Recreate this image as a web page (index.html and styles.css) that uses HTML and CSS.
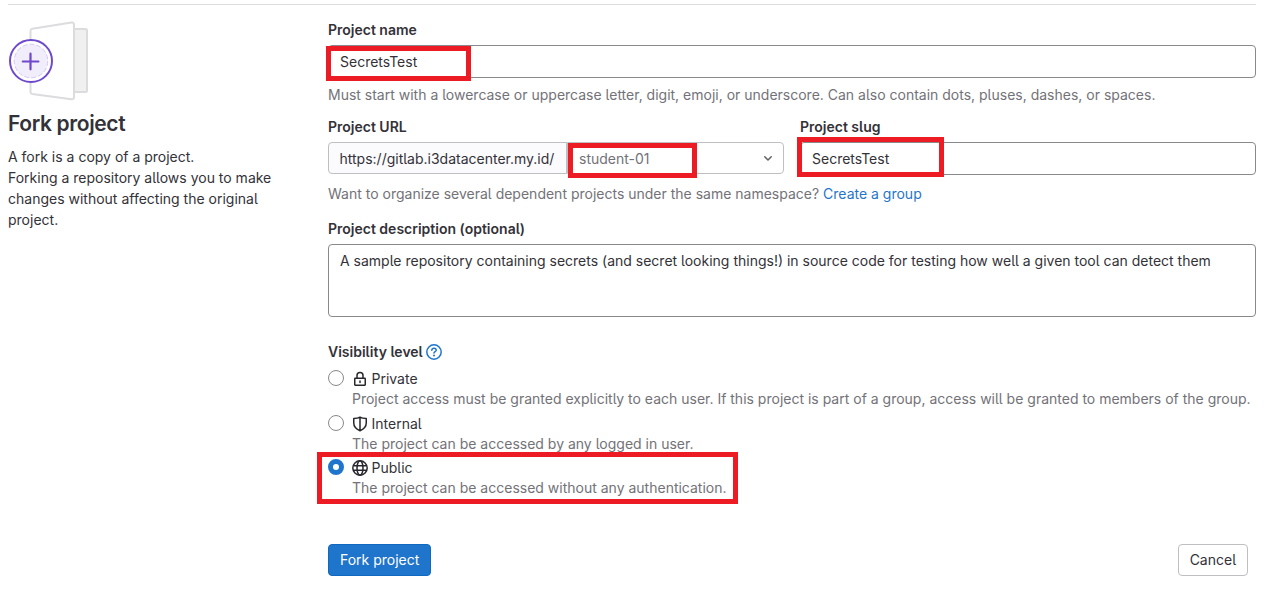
FILE: index.html
```html
<!DOCTYPE html>
<html lang="en">
<head>
<meta charset="utf-8">
<title>Fork project</title>
<link rel="stylesheet" href="styles.css">
</head>
<body>
<main class="page">
  <aside class="intro">
    <svg class="illustration" width="82" height="80" viewBox="0 0 82 80" fill="none">
      <path d="M66 8h11.500q1.500 0 1.500 1.500v60q0 1.500-1.500 1.500H66z" fill="#f0f0f0" stroke="#dcdcde" stroke-width="2"/>
      <path d="M22.500 9.800q0-1.800 1.800-2.100L63.500 1.600q2.500-.3 2.500 2V76q0 2.500-2.500 2.200L24.300 73q-1.800-.3-1.800-2.100z" fill="#fff" stroke="#dcdcde" stroke-width="2"/>
      <circle cx="23" cy="40" r="21" fill="#fff" stroke="#6e49cb" stroke-width="2"/>
      <circle cx="23" cy="40" r="16.800" fill="#f1edfb" stroke="#cbbcf0" stroke-width=".8" stroke-dasharray="5 2"/>
      <path d="M22.500 32.700v15.600M14.800 40.500h15.600" stroke="#6e49cb" stroke-width="2.200" stroke-linecap="round"/>
    </svg>
    <h1 class="title">Fork project</h1>
    <p class="lead">A fork is a copy of a project.<br>Forking a repository allows you to make changes without affecting the original project.</p>
  </aside>

  <form class="form">
    <div class="field">
      <label class="label">Project name</label>
      <div class="input marked">SecretsTest<span class="mark mark-name"></span></div>
      <p class="help">Must start with a lowercase or uppercase letter, digit, emoji, or underscore. Can also contain dots, pluses, dashes, or spaces.</p>
    </div>

    <div class="field location">
      <div class="columns">
        <div class="url">
          <label class="label">Project URL</label>
          <div class="group marked">
            <span class="prefix">https://gitlab.i3datacenter.my.id/</span>
            <span class="select">student-01
              <svg width="16" height="16" viewBox="0 0 16 16" fill="none" stroke="#626168" stroke-width="1.500" stroke-linecap="round" stroke-linejoin="round"><path d="M4.750 5.750 8 9l3.250-3.250"/></svg>
            </span>
            <span class="mark mark-namespace"></span>
          </div>
        </div>
        <div class="slug">
          <label class="label">Project slug</label>
          <div class="input marked">SecretsTest<span class="mark mark-slug"></span></div>
        </div>
      </div>
      <p class="help">Want to organize several dependent projects under the same namespace? <a class="link">Create a group</a></p>
    </div>

    <div class="field description">
      <label class="label">Project description (optional)</label>
      <div class="textarea">A sample repository containing secrets (and secret looking things!) in source code for testing how well a given tool can detect them</div>
    </div>

    <div class="visibility">
      <div class="label legend">Visibility level
        <svg width="16" height="16" viewBox="0 0 16 16" fill="none" stroke="#1f75cb" stroke-width="1.500" stroke-linecap="round"><circle cx="8" cy="8" r="7.200"/><path d="M5.800 6.200C5.900 4.900 6.800 4.300 8 4.300s2.200.7 2.200 1.900c0 1.500-2.200 1.500-2.200 2.900"/><circle cx="8" cy="11.600" r="1" fill="#1f75cb" stroke="none"/></svg>
      </div>
      <div class="option">
        <span class="radio"></span>
        <div class="choice">
          <svg width="16" height="16" viewBox="0 0 16 16" fill="none" stroke="#28272d" stroke-width="1.500"><rect x="2.750" y="7.250" width="10.500" height="7" rx=".4"/><path d="M5 7V4.500a3 3 0 0 1 6 0V7"/><path d="M8 9.900v1.700" stroke-linecap="round"/></svg>
          Private
        </div>
        <p class="note">Project access must be granted explicitly to each user. If this project is part of a group, access will be granted to members of the group.</p>
      </div>
      <div class="option internal">
        <span class="radio"></span>
        <div class="choice">
          <svg width="16" height="16" viewBox="0 0 16 16" fill="none" stroke="#28272d" stroke-width="1.500" stroke-linejoin="round"><path d="M8 1.200C6.300 2.200 4.200 2.500 1.750 2.500V7c0 3.500 2.300 6 6.250 7.700 3.950-1.700 6.250-4.200 6.250-7.700V2.500C11.800 2.500 9.700 2.200 8 1.200zM8 1.200v13.500"/></svg>
          Internal
        </div>
        <p class="note">The project can be accessed by any logged in user.</p>
      </div>
      <div class="option public marked">
        <span class="radio checked"></span>
        <div class="choice">
          <svg width="16" height="16" viewBox="0 0 16 16" fill="none" stroke="#28272d" stroke-width="1.500"><circle cx="8" cy="8" r="7.200"/><ellipse cx="8" cy="8" rx="3" ry="7.200"/><path d="M1.200 5.750h13.600M1.200 10.250h13.600" stroke-width="1.300"/></svg>
          Public
        </div>
        <p class="note">The project can be accessed without any authentication.</p>
        <span class="mark mark-public"></span>
      </div>
    </div>

    <div class="actions">
      <button type="button" class="button confirm">Fork project</button>
      <button type="button" class="button">Cancel</button>
    </div>
  </form>
</main>
</body>
</html>
```
FILE: styles.css
```css
* { box-sizing: border-box; }

body {
  margin: 0;
  background: #fff;
  color: #333238;
  font-family: Inter, "Noto Sans", sans-serif;
  font-size: 14px;
  line-height: 20px;
  font-feature-settings: "cv05";
}

p, h1 { margin: 0; }

.page {
  display: grid;
  grid-template-columns: 320px 928px;
  margin: 4px 11px 0 8px;
  border-top: 1px solid #dcdcde;
  width: 1248px;
}

.intro { padding-top: 16px; }
.illustration { display: block; }

.title {
  margin-top: 9px;
  font-size: 21px;
  line-height: 28px;
  font-weight: 600;
  letter-spacing: -0.37px;
}

.lead {
  margin-top: 8px;
  width: 280px;
  line-height: 21px;
}

.form { padding-top: 15px; }

.label {
  display: block;
  margin-bottom: 5px;
  font-weight: 600;
}

.input, .textarea {
  border: 1px solid #89888d;
  border-radius: 4px;
  padding: 6px 11px;
}

.input { height: 33px; }
.textarea { height: 73px; }

.help {
  margin-top: 7px;
  color: #737278;
}

.link { color: #1f75cb; }

.location { margin-top: 12px; }
.location .help { margin-top: 9px; }
.columns { display: grid; grid-template-columns: 456px 456px; gap: 16px; }

.group {
  display: flex;
  height: 32px;
}

.prefix, .select {
  display: flex;
  align-items: center;
  border: 1px solid #bfbfc3;
}

.prefix {
  width: 239px;
  padding-left: 10.5px;
  padding-top: 1px;
  background: #fbfafd;
  border-radius: 4px 0 0 4px;
}

.select {
  flex: 1;
  justify-content: space-between;
  padding: 1px 7px 0 11px;
  color: #737278;
  border-radius: 0 4px 4px 0;
}

.description { margin-top: 15px; }

.visibility { margin-top: 25px; }

.legend {
  display: flex;
  align-items: center;
  gap: 3px;
  margin-bottom: 7px;
}

.option {
  display: grid;
  grid-template-columns: 24px 1fr;
  grid-template-rows: 20px 20px;
  height: 45px;
}

.option.internal { height: 44px; }
.option.public { height: 41px; }

.radio {
  width: 16px;
  height: 16px;
  margin-top: 1px;
  border: 1px solid #89888d;
  border-radius: 50%;
}

.radio.checked { border: 5.500px solid #1f75cb; }

.choice {
  display: flex;
  align-items: center;
  gap: 3.5px;
  white-space: nowrap;
}

.note {
  grid-column: 2;
  color: #737278;
  white-space: nowrap;
}

.actions {
  display: flex;
  justify-content: space-between;
  margin-top: 45px;
  width: 920px;
}

.button {
  height: 32px;
  padding: 0 11px;
  border: 1px solid #bfbfc3;
  border-radius: 4px;
  background: #fff;
  color: #333238;
  font: inherit;
  font-feature-settings: inherit;
}

.confirm {
  border-color: #1068bf;
  background: #1f75cb;
  color: #fff;
}

/* Highlight frames drawn over the fields */
.marked { position: relative; }
.mark { position: absolute; border: 5px solid #ed1c24; }
.mark-name { left: -3px; top: 0; width: 145px; height: 35px; }
.mark-namespace { left: 240px; top: 1px; width: 129px; height: 35px; }
.mark-slug { left: -4px; top: -6px; width: 147px; height: 40px; }
.mark-public { left: -11px; top: -6px; width: 421px; height: 52px; }
```
